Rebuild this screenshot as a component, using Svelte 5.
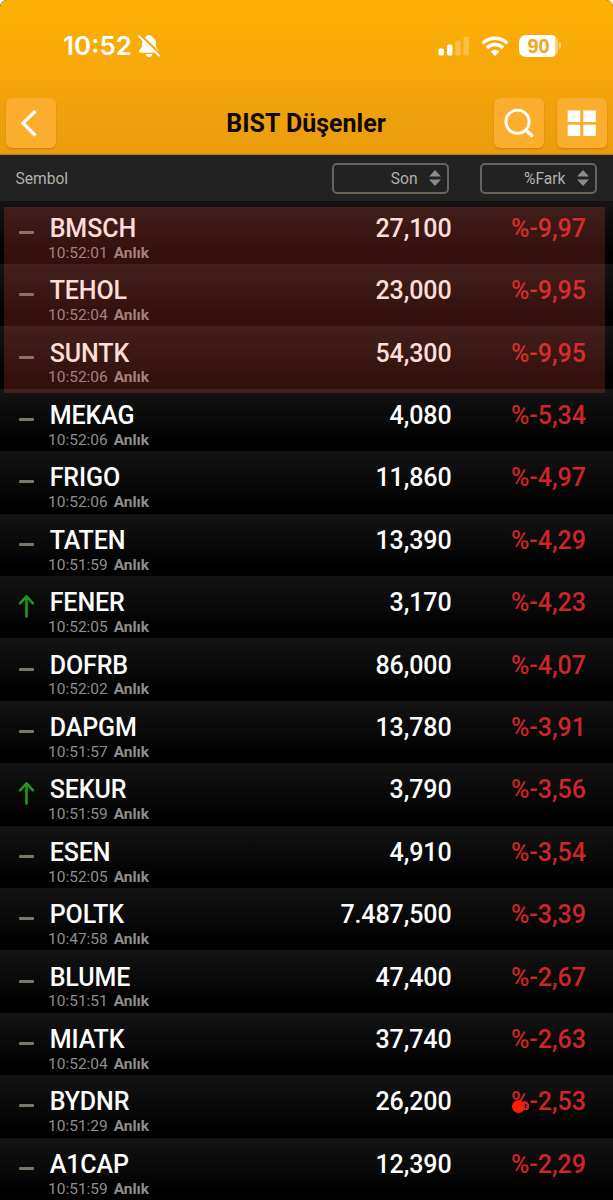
<script lang="ts">
  type Stock = {
    symbol: string;
    time: string;
    last: string;
    change: string;
    up?: boolean;
  };

  const stocks: Stock[] = [
    { symbol: 'BMSCH', time: '10:52:01', last: '27,100', change: '%-9,97' },
    { symbol: 'TEHOL', time: '10:52:04', last: '23,000', change: '%-9,95' },
    { symbol: 'SUNTK', time: '10:52:06', last: '54,300', change: '%-9,95' },
    { symbol: 'MEKAG', time: '10:52:06', last: '4,080', change: '%-5,34' },
    { symbol: 'FRIGO', time: '10:52:06', last: '11,860', change: '%-4,97' },
    { symbol: 'TATEN', time: '10:51:59', last: '13,390', change: '%-4,29' },
    { symbol: 'FENER', time: '10:52:05', last: '3,170', change: '%-4,23', up: true },
    { symbol: 'DOFRB', time: '10:52:02', last: '86,000', change: '%-4,07' },
    { symbol: 'DAPGM', time: '10:51:57', last: '13,780', change: '%-3,91' },
    { symbol: 'SEKUR', time: '10:51:59', last: '3,790', change: '%-3,56', up: true },
    { symbol: 'ESEN', time: '10:52:05', last: '4,910', change: '%-3,54' },
    { symbol: 'POLTK', time: '10:47:58', last: '7.487,500', change: '%-3,39' },
    { symbol: 'BLUME', time: '10:51:51', last: '47,400', change: '%-2,67' },
    { symbol: 'MIATK', time: '10:52:04', last: '37,740', change: '%-2,63' },
    { symbol: 'BYDNR', time: '10:51:29', last: '26,200', change: '%-2,53' },
    { symbol: 'A1CAP', time: '10:51:59', last: '12,390', change: '%-2,29' }
  ];

  const sorters = ['Son', '%Fark'];
</script>

<div class="screen">
  <header class="top">
    <div class="status">
      <span class="clock">10:52</span>
      <svg class="bell" width="22" height="24" viewBox="0 0 22 24">
        <path
          fill="#fff"
          d="M11 1c-1.600 0-2.700.7-3.100 2C5.400 4 4.200 6.200 4.100 9c-.1 3.700-.6 5.300-2.700 7.200-1.100 1-.6 2.600.8 2.600h17.600c1.400 0 1.900-1.600.8-2.600-2.100-1.900-2.600-3.500-2.700-7.200-.1-2.800-1.300-5-3.800-6-.4-1.300-1.500-2-3.100-2zM7.600 20h6.800c-.3 1.900-1.600 2.900-3.400 2.900S7.900 21.900 7.600 20z"
        />
        <path d="M2 1.800l20 19.500" stroke="#f6aa0a" stroke-width="4.200" />
        <path d="M1 2.200l20 19.300" stroke="#fff" stroke-width="2" stroke-linecap="round" />
      </svg>
      <div class="indicators">
        <svg width="32" height="20" viewBox="0 0 32 20" fill="#fff">
          <rect x="0.500" y="12.500" width="5.400" height="7" rx="1.500" />
          <rect x="9" y="8.500" width="5.400" height="11" rx="1.500" />
          <rect x="17.300" y="4.500" width="5.400" height="15" rx="1.500" opacity="0.250" />
          <rect x="25.500" y="0.500" width="5.400" height="19" rx="1.500" opacity="0.250" />
        </svg>
        <svg class="wifi" width="28" height="20" viewBox="0 0 28 20">
          <g fill="none" stroke="#fff" stroke-width="3.500">
            <path d="M1.700 7.300a17.300 17.300 0 0 1 24.600 0" />
            <path d="M6 11.900a11.300 11.300 0 0 1 16 0" />
          </g>
          <path fill="#fff" d="M14 20l-4.400-4.500a6.200 6.200 0 0 1 8.800 0z" />
        </svg>
        <div class="battery">90</div>
        <span class="battery-cap"></span>
      </div>
    </div>

    <div class="nav">
      <button type="button" class="nav-button" aria-label="Geri">
        <svg width="50" height="50" viewBox="0 0 50 50" fill="none" stroke="#fff" stroke-width="3.200">
          <path d="M29.500 13L17 25.200l12.500 12.300" />
        </svg>
      </button>
      <h1>BIST Düşenler</h1>
      <button type="button" class="nav-button" aria-label="Ara">
        <svg width="50" height="50" viewBox="0 0 50 50" fill="none" stroke="#fff">
          <circle cx="23.500" cy="23.700" r="11.600" stroke-width="2.800" />
          <path d="M31.800 32l6 5.500" stroke-width="3.300" stroke-linecap="round" />
        </svg>
      </button>
      <button type="button" class="nav-button" aria-label="Menü">
        <svg width="50" height="50" viewBox="0 0 50 50" fill="#fff">
          <path d="M10.700 12.500h12.500v11.500H10.700zM26.300 12.500h12.500v11.500H26.300zM10.700 26.800h12.500V38H10.700zM26.300 26.800h12.500V38H26.300z" />
        </svg>
      </button>
    </div>
  </header>

  <div class="columns">
    <span class="label">Sembol</span>
    {#each sorters as sorter}
      <button type="button" class="sorter">
        <span>{sorter}</span>
        <svg width="12" height="16" viewBox="0 0 12 16" fill="#8b8b8b">
          <path d="M6 0l6 6.600H0zM6 16L0 9.400h12z" />
        </svg>
      </button>
    {/each}
  </div>

  <div class="list">
    {#each stocks as stock}
      <div class="row">
        <div class="trend">
          {#if stock.up}
            <svg width="18" height="24" viewBox="0 0 18 24" fill="none" stroke="#20981c" stroke-width="2.600" stroke-linecap="round" stroke-linejoin="round">
              <path d="M8.500 22.500V2.500M2 9.300l6.500-7 6.500 7" />
            </svg>
          {:else}
            <span class="dash"></span>
          {/if}
        </div>
        <div class="name">
          <div class="symbol">{stock.symbol}</div>
          <div class="time">{stock.time} <b>Anlık</b></div>
        </div>
        <div class="last">{stock.last}</div>
        <div class="change">{stock.change}</div>
      </div>
    {/each}
    <div class="highlight"></div>
    <span class="marker"></span>
  </div>
</div>

<style>
  :global(body) {
    background: #fff;
  }

  .screen {
    display: flex;
    flex-direction: column;
    width: 613px;
    height: 1200px;
    overflow: hidden;
    border-radius: 7px 7px 0 0;
    background: #000;
    color: #fff;
    font-family: Roboto, 'Liberation Sans', sans-serif;
  }

  button {
    border: none;
    padding: 0;
    font: inherit;
    color: inherit;
    background: none;
  }

  svg {
    display: block;
    flex: none;
  }

  .top {
    flex: none;
    box-sizing: border-box;
    height: 154.500px;
    background: linear-gradient(#fdb103, #f5a70b 50%, #e99b0e);
    border-bottom: 1px solid #b17d27;
  }

  .status {
    display: flex;
    align-items: center;
    box-sizing: border-box;
    height: 98px;
    padding: 0 52px 6px 63px;
  }

  .clock {
    width: 69px;
    font-family: Inter, sans-serif;
    font-size: 26px;
    font-weight: 600;
    line-height: 30px;
    white-space: nowrap;
  }

  .bell {
    margin-left: 6px;
  }

  .indicators {
    display: flex;
    align-items: center;
    margin-left: auto;
    margin-top: -1px;
  }

  .wifi {
    margin-left: 11px;
  }

  .battery {
    width: 39px;
    height: 22px;
    margin-left: 10px;
    border-radius: 7px;
    background: linear-gradient(90deg, #fff 36px, #fbd07b 36px);
    color: #f0a51a;
    font: 700 20px/23px 'Liberation Sans', sans-serif;
    text-align: center;
  }

  .battery-cap {
    width: 2px;
    height: 7px;
    margin-left: 1px;
    border-radius: 0 3px 3px 0;
    background: #fbd07b;
  }

  .nav {
    display: flex;
    align-items: center;
    gap: 12.500px;
    padding: 0 6.400px 0 6px;
  }

  .nav-button {
    width: 50px;
    height: 50px;
    border-radius: 6px;
    background: #fbae2e;
    box-shadow: 0 1px 2px rgba(130, 80, 0, 0.35);
  }

  h1 {
    flex: 1;
    margin: 0;
    padding: 2px 0 0 62px;
    font-size: 25px;
    font-weight: 700;
    line-height: 48px;
    text-align: center;
    color: #0d0803;
  }

  .columns {
    display: flex;
    flex: none;
    align-items: center;
    gap: 31px;
    box-sizing: border-box;
    height: 47px;
    padding: 1px 16px 0 15.500px;
    background: #222;
    border-bottom: 1px solid #111;
    color: #b3b1af;
    font-size: 15.600px;
  }

  .label {
    flex: 1;
  }

  .label,
  .sorter span {
    padding-top: 1px;
  }

  .sorter {
    display: flex;
    align-items: center;
    justify-content: flex-end;
    gap: 11px;
    box-sizing: border-box;
    width: 117px;
    height: 31px;
    padding-right: 6.500px;
    border: 2px solid #68635d;
    border-radius: 5px;
  }

  .list {
    position: relative;
  }

  .row {
    display: flex;
    box-sizing: border-box;
    height: 62.420px;
    padding: 12.300px 27px 0 18px;
    background: linear-gradient(#141414, #0a0a0a 45%, #000 85%);
    font-size: 25px;
    line-height: 30px;
  }

  .trend {
    display: flex;
    align-items: center;
    width: 30px;
    height: 36px;
  }

  .dash {
    width: 15px;
    height: 3px;
    margin: 1px 0 0 1px;
    border-radius: 1px;
    background: #7d776b;
  }

  .name {
    flex: 1;
  }

  .symbol {
    padding-left: 1.700px;
    font-weight: 500;
    letter-spacing: -0.100px;
  }

  .time {
    margin-top: -0.300px;
    font-size: 15.500px;
    line-height: 18px;
    color: #908e8c;
  }

  .time b {
    margin-left: 2px;
  }

  .last {
    font-weight: 500;
    letter-spacing: -0.100px;
  }

  .change {
    width: 134.500px;
    font-weight: 500;
    text-align: right;
    color: #cd2528;
  }

  /* tinted box over the limit-down stocks */
  .highlight {
    position: absolute;
    top: 5px;
    left: 4px;
    width: 601px;
    height: 186px;
    background: rgba(255, 80, 60, 0.2);
  }

  .marker {
    position: absolute;
    top: 898px;
    left: 512px;
    width: 13px;
    height: 13px;
    border-radius: 50%;
    background: #ff1e05;
  }

  .marker::after {
    content: '';
    position: absolute;
    top: 3px;
    left: 11px;
    width: 4px;
    height: 5px;
    border: 1.500px solid #d8261c;
    border-radius: 2px;
  }
</style>
